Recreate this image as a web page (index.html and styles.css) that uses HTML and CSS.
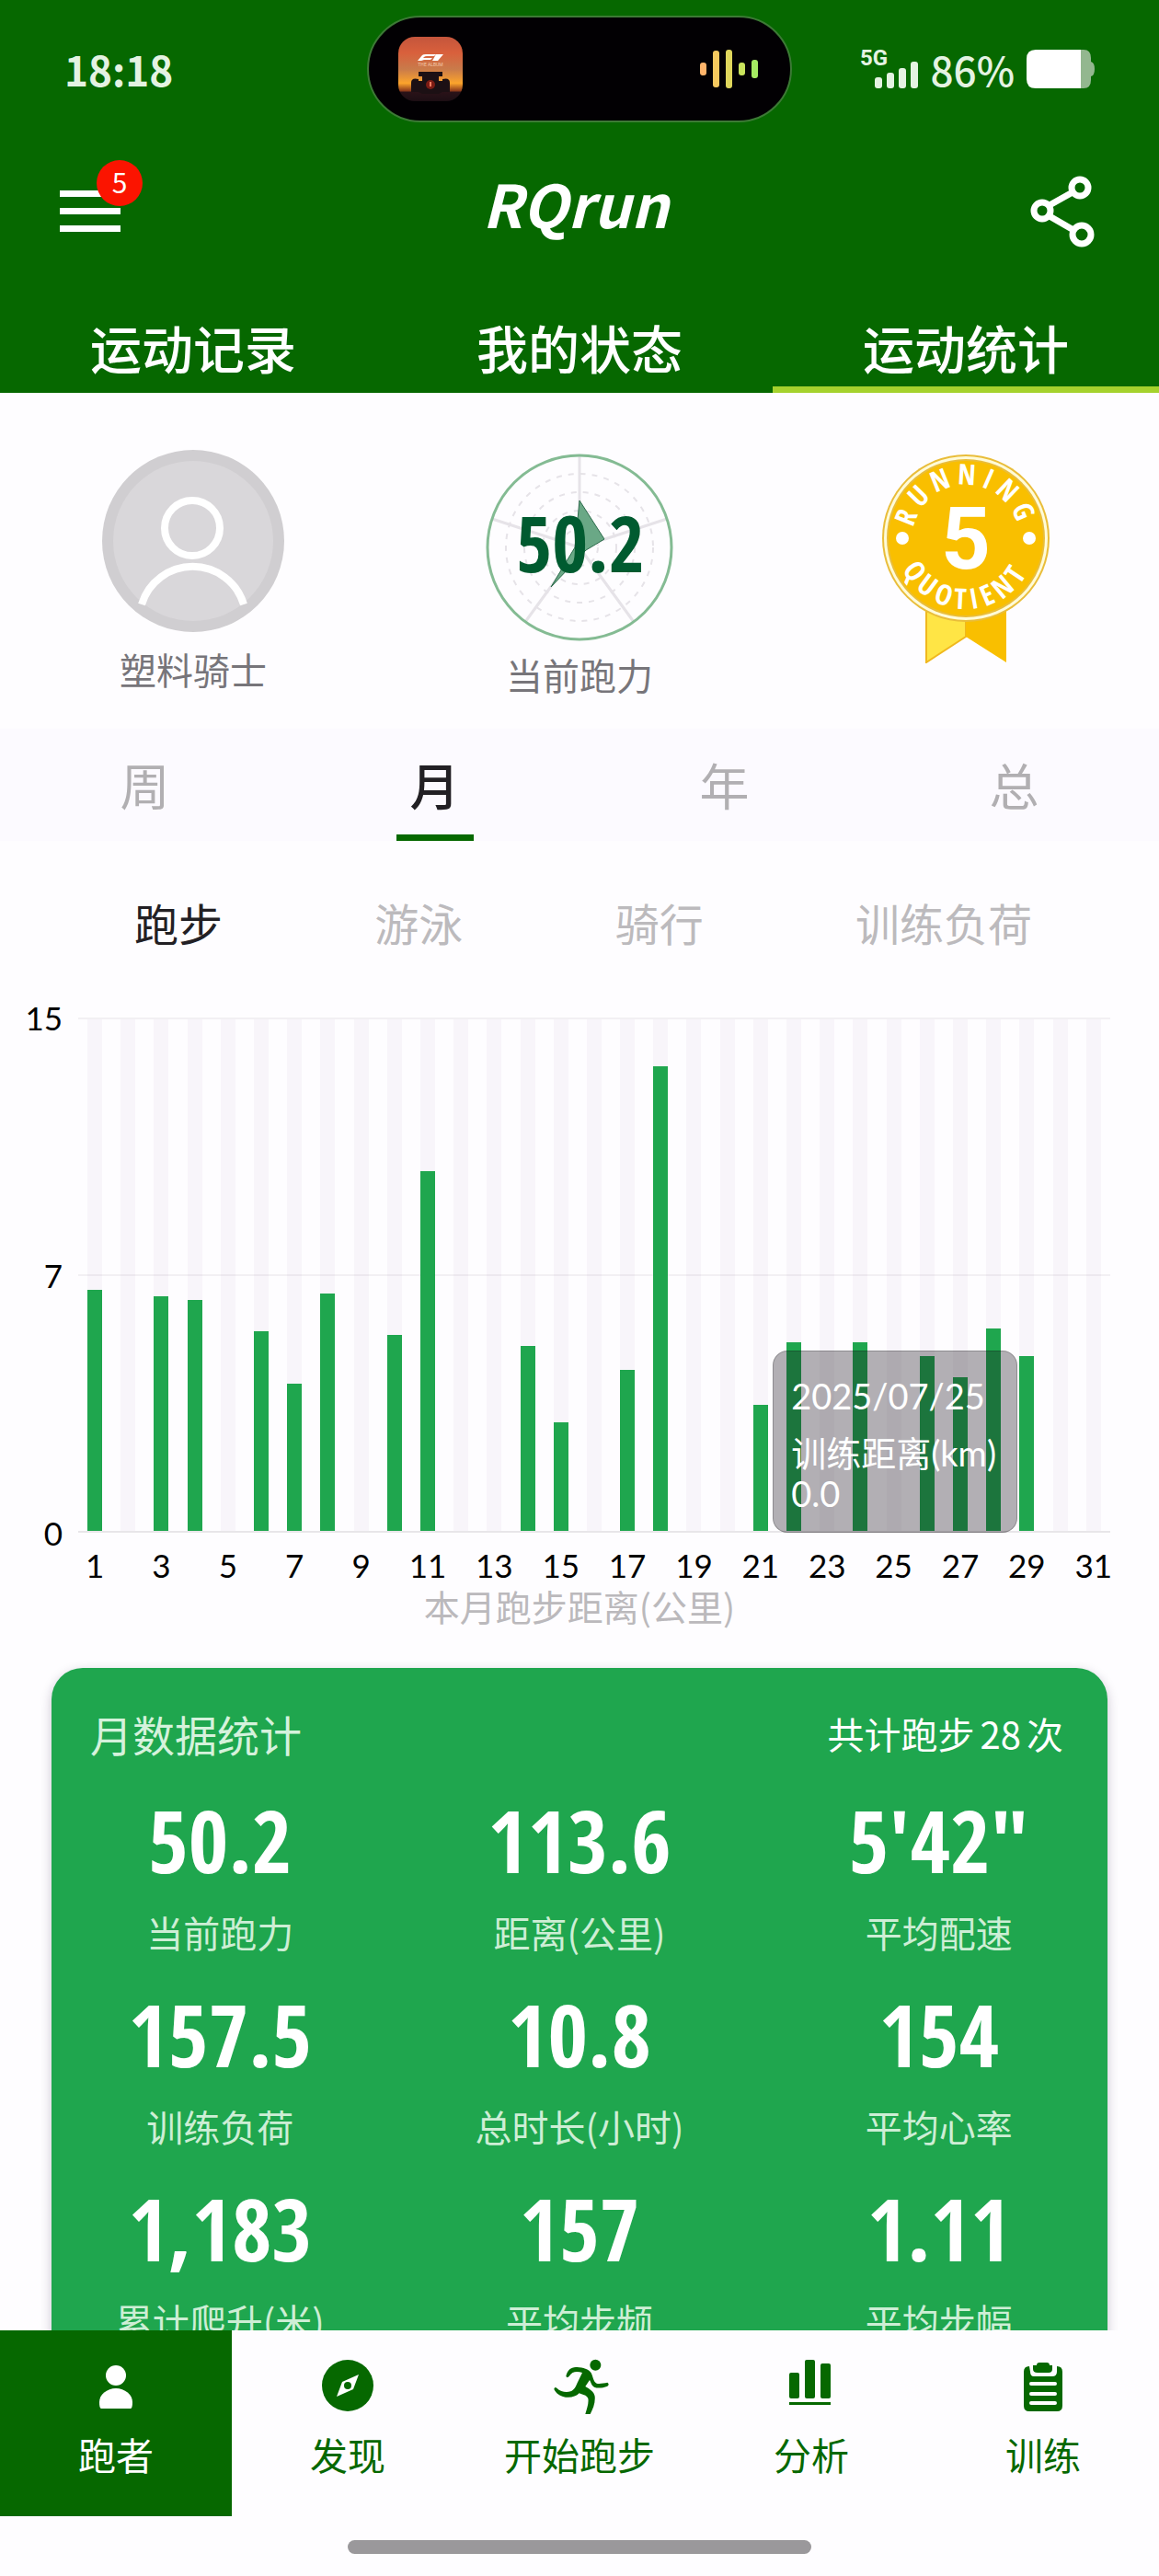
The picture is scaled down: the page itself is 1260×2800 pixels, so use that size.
FILE: index.html
```html
<!DOCTYPE html>
<html lang="zh-CN">
<head>
  <meta charset="UTF-8">
  <meta name="viewport" content="width=device-width, initial-scale=1.0">
  <title>RQrun</title>
  <link rel="stylesheet" href="styles.css">
</head>
<body>

  <header class="header">
    <div class="status-bar">
      <div class="time">18:18</div>
      <div class="island">
        <svg width="70" height="70" viewBox="0 0 70 70">
          <defs>
            <linearGradient id="sunset" x1="0" y1="0" x2="0" y2="1">
              <stop offset="0" stop-color="#c4553c"/>
              <stop offset="0.25" stop-color="#d9603c"/>
              <stop offset="0.5" stop-color="#c97a4a"/>
              <stop offset="0.72" stop-color="#fba42c"/>
              <stop offset="0.84" stop-color="#8c3a1c"/>
              <stop offset="0.86" stop-color="#2a1218"/>
              <stop offset="1" stop-color="#1c0e14"/>
            </linearGradient>
          </defs>
          <rect width="70" height="70" rx="18" fill="url(#sunset)"/>
          <path d="M21 26 L26 20 Q27 19 30 19 H41 L39 21 H31 Q29 21 28 22 L27 23 H37 L35 25 H28 L25 26 Z M41 19 H49 L43 26 H37 Z" fill="#fff"/>
          <text x="35" y="32" class="cover-text">THE ALBUM</text>
          <path d="M22 38 H48 V43 H44 V48 H48 V46 Q56 44 56 50 V60 H48 L44 62 H26 L22 60 H14 V50 Q14 44 22 46 V48 H26 V43 H22 Z" fill="#1c1014"/>
          <circle cx="35" cy="52" r="5" fill="#7c1c14"/>
          <rect x="34" y="49" width="2" height="5" fill="#ff7a60"/>
        </svg>
        <svg width="64" height="44" viewBox="0 0 64 44">
          <rect x="0" y="15" width="7" height="14" rx="3" fill="#ffb46b"/>
          <rect x="14" y="2" width="7" height="40" rx="3" fill="#f6c95f"/>
          <rect x="28" y="1" width="7" height="42" rx="3" fill="#dfd65c"/>
          <rect x="42" y="15" width="7" height="14" rx="3" fill="#c9e35c"/>
          <rect x="56" y="12" width="7" height="20" rx="3" fill="#a5ec62"/>
        </svg>
      </div>
      <div class="status-right">
        <svg class="signal" width="64" height="42" viewBox="0 0 64 42" fill="#e4f3e2">
          <text x="0" y="17" class="net-text">5G</text>
          <rect x="16" y="30" width="8" height="12" rx="3"/>
          <rect x="29" y="25" width="8" height="17" rx="3"/>
          <rect x="42" y="20" width="8" height="22" rx="3"/>
          <rect x="55" y="13" width="8" height="29" rx="3"/>
        </svg>
        <span class="battery-text">86%</span>
        <svg width="74" height="42" viewBox="0 0 74 42">
          <path d="M59 0 H62 Q70 0 70 9 V13 Q74 14 74 21 Q74 28 70 29 V33 Q70 42 62 42 H59 Z" fill="#93b78f"/>
          <path d="M59 0 H10 Q0 0 0 10 V32 Q0 42 10 42 H59 Z" fill="#fff"/>
        </svg>
      </div>
    </div>

    <div class="title-bar">
      <button class="icon-btn menu-btn" aria-label="菜单">
        <svg width="66" height="46" viewBox="0 0 66 46" fill="#fff">
          <rect y="0" width="66" height="7"/>
          <rect y="19" width="66" height="7"/>
          <rect y="38" width="66" height="7"/>
        </svg>
        <span class="badge">5</span>
      </button>
      <h1 class="title">RQrun</h1>
      <button class="icon-btn" aria-label="分享">
        <svg width="70" height="78" viewBox="0 0 70 78" fill="none" stroke="#fff" stroke-width="7">
          <path d="M21 32 L46 18 M21 44 L47 59"/>
          <circle cx="54" cy="13" r="9"/>
          <circle cx="13" cy="38" r="9"/>
          <circle cx="56" cy="64" r="10"/>
        </svg>
      </button>
    </div>

    <nav class="tabs">
      <button class="tab">运动记录</button>
      <button class="tab">我的状态</button>
      <button class="tab active">运动统计</button>
    </nav>
  </header>

  <main class="content">
    <section class="profile">
      <div class="profile-item">
        <svg width="198" height="202" viewBox="0 0 198 202">
          <circle cx="99" cy="99" r="99" fill="#d0ced1"/>
          <circle cx="99" cy="99" r="87" fill="#d9d7da"/>
          <g fill="none" stroke="#fff" stroke-width="8">
            <circle cx="98" cy="85" r="30"/>
            <path d="M43 168 A58 58 0 0 1 154 168"/>
          </g>
        </svg>
        <p class="profile-label">塑料骑士</p>
      </div>
      <div class="profile-item">
        <svg width="208" height="208" viewBox="0 0 208 208">
          <g fill="none" stroke="#e6e3e8" stroke-width="3">
            <path d="M104 106 V6 M104 106 L199 75 M104 106 L163 187 M104 106 L45 187 M104 106 L9 75"/>
            <g stroke-width="2" stroke-dasharray="6 7">
              <circle cx="104" cy="106" r="80"/>
              <circle cx="104" cy="106" r="60"/>
              <circle cx="104" cy="106" r="40"/>
              <circle cx="104" cy="106" r="20"/>
            </g>
          </g>
          <circle cx="104" cy="106" r="100" fill="none" stroke="#84bb93" stroke-width="3"/>
          <path d="M104 55 L131 97 L111 109 L73 149 L99 106 Z" fill="#6aa886" stroke="#2c6b4b"/>
          <text x="105" y="133" class="radar-value">50.2</text>
        </svg>
        <p class="profile-label">当前跑力</p>
      </div>
      <div class="profile-item">
        <svg width="184" height="232" viewBox="0 0 184 232">
          <path d="M49 170 H92 V203 L49 231 Z" fill="#ffe545" stroke="#f0b81e" stroke-width="2"/>
          <path d="M92 170 H136 V231 L92 203 Z" fill="#f9bf00"/>
          <circle cx="92" cy="96" r="91" fill="#e9bd3a"/>
          <circle cx="92" cy="96" r="89" fill="#fffbd8"/>
          <circle cx="92" cy="96" r="86" fill="#e9bd3a"/>
          <circle cx="92" cy="96" r="84" fill="#f9bf00"/>
          <path id="arc-top" d="M34 96 A58 58 0 0 1 150 96" fill="none"/>
          <path id="arc-bottom" d="M15 96 A77 77 0 0 0 169 96" fill="none"/>
          <g fill="#fff">
            <circle cx="23" cy="96" r="7"/>
            <circle cx="161" cy="96" r="7"/>
            <text class="medal-text"><textPath href="#arc-top" startOffset="50%">RUNNING</textPath></text>
            <text class="medal-text"><textPath href="#arc-bottom" startOffset="50%">QUOTIENT</textPath></text>
            <text x="92" y="129" class="medal-value">5</text>
          </g>
        </svg>
      </div>
    </section>

    <nav class="periods">
      <button class="period">周</button>
      <button class="period active">月</button>
      <button class="period">年</button>
      <button class="period">总</button>
    </nav>

    <nav class="sports">
      <button class="sport active">跑步</button>
      <button class="sport">游泳</button>
      <button class="sport">骑行</button>
      <button class="sport">训练负荷</button>
    </nav>

    <section class="chart">
      <div class="y-axis"><span>15</span><span>7</span><span>0</span></div>
      <div class="plot">
        <div class="bars" id="bars"></div>
        <div class="tooltip">
          <p class="tooltip-date">2025/07/25</p>
          <p class="tooltip-line">训练距离(km)</p>
          <p class="tooltip-line">0.0</p>
        </div>
      </div>
      <div class="x-axis" id="x-axis"></div>
      <p class="caption">本月跑步距离(公里)</p>
    </section>

    <section class="card">
      <div class="card-head">
        <h2 class="card-title">月数据统计</h2>
        <p class="card-total">共计跑步<span>28</span>次</p>
      </div>
      <dl class="stats">
        <div class="stat"><dd>50.2</dd><dt>当前跑力</dt></div>
        <div class="stat"><dd>113.6</dd><dt>距离(公里)</dt></div>
        <div class="stat"><dd>5'42"</dd><dt>平均配速</dt></div>
        <div class="stat"><dd>157.5</dd><dt>训练负荷</dt></div>
        <div class="stat"><dd>10.8</dd><dt>总时长(小时)</dt></div>
        <div class="stat"><dd>154</dd><dt>平均心率</dt></div>
        <div class="stat"><dd>1,183</dd><dt>累计爬升(米)</dt></div>
        <div class="stat"><dd>157</dd><dt>平均步频</dt></div>
        <div class="stat"><dd>1.11</dd><dt>平均步幅</dt></div>
      </dl>
    </section>
  </main>

  <footer class="footer">
    <nav class="bottom-nav">
      <a href="#" class="nav-item active">
        <svg width="64" height="64" viewBox="0 0 64 64" fill="#fff">
          <circle cx="32" cy="21" r="11"/>
          <path d="M16 57 Q14 57 14 50 A18 15 0 0 1 50 50 Q50 57 48 57 Z"/>
        </svg>
        跑者
      </a>
      <a href="#" class="nav-item">
        <svg width="64" height="64" viewBox="0 0 64 64" fill="#066800">
          <circle cx="32" cy="32" r="28"/>
          <path d="M44 20 L38 36 L20 44 L26 28 Z" fill="#fff"/>
          <circle cx="32" cy="32" r="4"/>
        </svg>
        发现
      </a>
      <a href="#" class="nav-item">
        <svg width="64" height="64" viewBox="24 33 192 192" fill="#066800">
          <circle cx="172" cy="62" r="18"/>
          <path d="M76 99 C80 78 94 67 112 69 C132 70 150 75 158 88 C164 98 165 118 176 122 C186 124 200 121 211 119 Q219 125 211 131 C196 137 180 139 168 134 C158 128 158 118 153 111 L139 132 C152 139 168 150 170 164 C172 186 164 204 155 222 L139 222 C144 204 151 186 148 171 C144 160 128 158 119 154 C108 166 86 171 66 165 C51 160 40 149 37 140 Q39 132 46 137 C58 149 76 153 91 148 C103 143 108 132 112 122 L129 87 C112 82 96 82 86 99 Q80 106 76 99 Z"/>
        </svg>
        开始跑步
      </a>
      <a href="#" class="nav-item">
        <svg width="64" height="64" viewBox="0 0 64 64" fill="#066800">
          <rect x="8" y="18" width="11" height="28" rx="2"/>
          <rect x="25" y="4" width="11" height="42" rx="2"/>
          <rect x="42" y="8" width="11" height="38" rx="2"/>
          <rect x="8" y="50" width="45" height="3"/>
        </svg>
        分析
      </a>
      <a href="#" class="nav-item">
        <svg width="64" height="64" viewBox="0 0 64 64" fill="#066800">
          <path d="M17 11 Q11 11 11 17 V54 Q11 60 17 60 H47 Q53 60 53 54 V17 Q53 11 47 11 V17 Q47 22 42 22 H22 Q18 22 18 17 Z"/>
          <path d="M25 10 Q25 7 28 7 H36 Q39 7 39 10 H42 V14 Q42 18 38 18 H26 Q21 18 21 14 V10 Z"/>
          <path d="M19 30 H45 M19 41 H45 M19 51 H45" stroke="#fff" stroke-width="4" stroke-linecap="round"/>
        </svg>
        训练
      </a>
    </nav>
    <div class="home-bar"></div>
  </footer>

  <script>
    const MAX_KM = 14.63;
    // km per day of the month
    const days = [6.9, 0, 6.7, 6.6, 0, 5.7, 4.2, 6.8, 0, 5.6, 10.3, 0, 0, 5.3, 3.1, 0,
                  4.6, 13.3, 0, 0, 3.6, 5.4, 0, 5.4, 0, 5.0, 4.4, 5.8, 5.0, 0, 0];
    const bars = document.getElementById('bars');
    const xAxis = document.getElementById('x-axis');

    days.forEach((km, i) => {
      const col = document.createElement('div');
      col.className = 'col';
      col.innerHTML = `<div class="track"><div class="bar" style="height: ${km / MAX_KM * 100}%"></div></div>`;
      bars.appendChild(col);

      const label = document.createElement('span');
      label.textContent = i % 2 === 0 ? i + 1 : '';
      xAxis.appendChild(label);
    });
  </script>

</body>
</html>
```

FILE: styles.css
```css
* { box-sizing: border-box; }
body { height: 100vh; margin: 0; display: flex; flex-direction: column; overflow: hidden; background-color: #fefdff; font-family: "Noto Sans CJK SC", sans-serif; }
h1, h2, p, dl, dd, dt { margin: 0; font-weight: 400; }
button { padding: 0; border: none; background: none; font-family: inherit; cursor: pointer; }
svg { display: block; flex: none; }

/* header */
.header { flex: none; background-color: #066800; color: #fff; }
.status-bar { display: grid; grid-template-columns: 1fr 462px 1fr; align-items: center; height: 150px; padding: 0 70px; }
.time { font-size: 44px; font-weight: 700; line-height: 54px; color: #e4f3e2; }
.island { display: flex; align-items: center; justify-content: space-between; height: 116px; padding: 0 34px 0 32px; border: 2px solid #3c7a35; border-radius: 58px; background-color: #020003; }
.cover-text { font-family: Roboto, sans-serif; font-size: 5px; fill: #f3c9a8; text-anchor: middle; }
.status-right { display: flex; align-items: center; justify-content: flex-end; gap: 13px; }
.signal { overflow: visible; }
.net-text { font-family: Roboto, sans-serif; font-size: 24px; font-weight: 700; }
.battery-text { font-size: 44px; font-weight: 500; line-height: 46px; color: #e4f3e2; }

.title-bar { display: flex; align-items: center; justify-content: space-between; height: 160px; margin-bottom: 24px; padding: 0 70px 0 65px; }
.icon-btn { position: relative; }
.badge { position: absolute; top: -33px; left: 40px; width: 50px; height: 50px; border-radius: 50%; background-color: #fb1400; color: #fff; font-size: 30px; line-height: 47px; text-align: center; }
.title { padding-bottom: 20px; font-size: 64px; font-weight: 700; font-style: italic; line-height: 80px; }

.tabs { display: flex; }
.tab { flex: 1; height: 93px; border-bottom: 7px solid transparent; color: #fff; font-size: 56px; font-weight: 500; line-height: 86px; }
.tab.active { border-bottom-color: #a5d22d; }

.content { flex: 1; min-height: 0; overflow: hidden; }

/* profile */
.profile { display: flex; height: 365px; padding-top: 62px; }
.profile-item { flex: 1; display: flex; flex-direction: column; align-items: center; gap: 12px; }
.profile-label { color: #77757a; font-size: 40px; line-height: 48px; }
.radar-value { font-family: "Open Sans Condensed", "Open Sans", sans-serif; font-size: 84px; font-weight: 700; fill: #005b30; text-anchor: middle; }
.medal-text { font-family: "Open Sans Condensed", "Open Sans", sans-serif; font-size: 31px; font-weight: 700; letter-spacing: 6px; text-anchor: middle; }
.medal-value { font-family: Roboto, sans-serif; font-size: 94px; font-weight: 700; text-anchor: middle; }

/* filters */
.periods { display: flex; background-color: #fcfaff; }
.period { position: relative; flex: 1; height: 122px; color: #b1afb2; font-size: 54px; line-height: 122px; }
.period.active { color: #222024; font-weight: 500; }
.period.active::after { content: ""; position: absolute; bottom: 0; left: 50%; width: 84px; height: 7px; margin-left: -42px; background-color: #066800; }
.sports { display: flex; justify-content: space-between; padding: 54px 138px 0 146px; }
.sport { color: #bcbabd; font-size: 48px; line-height: 68px; }
.sport.active { color: #222024; }

/* chart */
.chart { display: grid; grid-template-columns: 85px 1fr; padding: 70px 53px 0 0; }
.y-axis { display: flex; flex-direction: column; justify-content: space-between; margin: -20px 17px -20px 0; font-family: Lato, sans-serif; font-size: 35px; line-height: 40px; text-align: right; }
.plot { position: relative; height: 560px; border-top: 2px solid #f2f0f3; border-bottom: 2px solid #e8e6e9; background: linear-gradient(#f2f0f3, #f2f0f3) 0 50% / 100% 2px no-repeat; }
.bars { display: flex; height: 100%; }
.col { flex: 1; display: flex; justify-content: center; }
.track { display: flex; align-items: flex-end; width: 16px; background-color: rgba(90, 60, 120, 0.04); }
.bar { width: 100%; background-color: #1fa64e; }
.tooltip { position: absolute; right: 9%; bottom: -2px; padding: 20px 22px 20px 19px; border: 1px solid rgba(0, 0, 0, 0.2); border-radius: 16px; background-color: rgba(24, 18, 26, 0.33); color: #fff; white-space: nowrap; }
.tooltip-date { margin-bottom: 12px; font-family: Lato, sans-serif; font-size: 38px; line-height: 56px; }
.tooltip-line { font-family: Lato, "Noto Sans CJK SC", sans-serif; font-size: 38px; line-height: 44px; }
.x-axis { grid-column: 2; display: flex; margin-top: 14px; font-family: Lato, sans-serif; font-size: 35px; line-height: 42px; }
.x-axis span { flex: 1 1 0; display: flex; justify-content: center; width: 0; }
.caption { grid-column: 1 / 3; margin-right: -53px; color: #bbb9bc; font-size: 39px; line-height: 46px; text-align: center; }

/* month card */
.card { margin: 45px 56px 0; padding: 41px 0 40px; border-radius: 34px; background-color: #1fa64e; box-shadow: 0 4px 12px rgba(40, 20, 60, 0.25); color: #fff; }
.card-head { display: flex; align-items: center; justify-content: space-between; margin-bottom: 21px; padding: 0 48px 0 42px; }
.card-title { color: #d5f2dc; font-size: 46px; line-height: 60px; }
.card-total { font-size: 40px; line-height: 60px; }
.card-total span { margin: 0 6px; }
.stats { display: grid; grid-template-columns: repeat(3, 1fr); gap: 18px 24px; }
.stat { display: flex; flex-direction: column; align-items: center; gap: 7px; }
.stat dd { font-family: "Open Sans Condensed", "Open Sans", sans-serif; font-size: 94px; font-weight: 700; line-height: 130px; }
.stat dt { color: #cdeed5; font-size: 40px; line-height: 56px; }

/* bottom nav */
.footer { flex: none; background-color: #fefdff; }
.bottom-nav { display: flex; }
.nav-item { flex: 1; display: flex; flex-direction: column; align-items: center; gap: 12px; height: 202px; padding-top: 28px; color: #066800; font-size: 41px; line-height: 60px; text-decoration: none; }
.nav-item.active { background-color: #066800; color: #fff; }
.home-bar { width: 40%; height: 15px; margin: 26px auto 24px; border-radius: 8px; background-color: #9a989b; }
```
